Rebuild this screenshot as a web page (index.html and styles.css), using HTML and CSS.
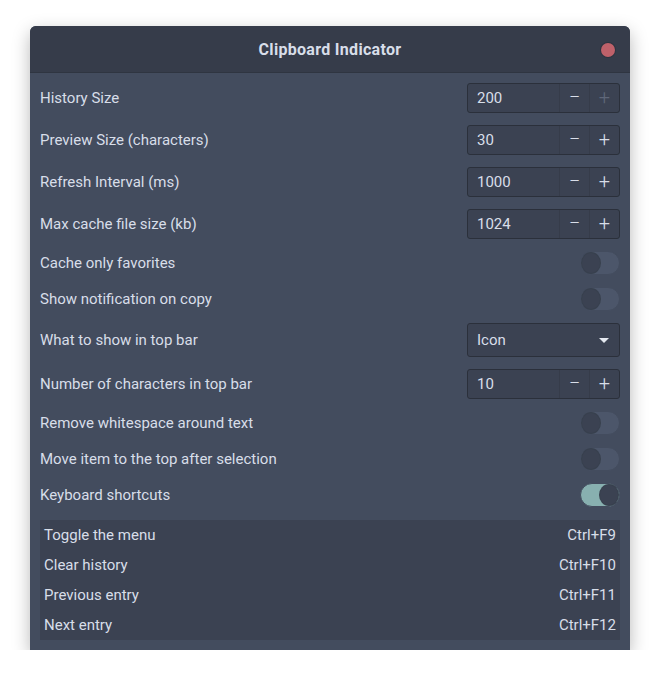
FILE: index.html
```
<!DOCTYPE html>
<html>
<head>
<meta charset="utf-8">
<link rel="stylesheet" href="styles.css">
</head>
<body>
<div class="stage">
  <div class="window">
    <div class="header">
      <div class="title">Clipboard Indicator</div>
      <div class="close"></div>
    </div>
    <div class="content">
      <div class="row"><span class="label">History Size</span>
        <div class="spin"><span class="val">200</span><span class="btn">&minus;</span><span class="btn dim">+</span></div></div>
      <div class="row"><span class="label">Preview Size (characters)</span>
        <div class="spin"><span class="val">30</span><span class="btn">&minus;</span><span class="btn">+</span></div></div>
      <div class="row"><span class="label">Refresh Interval (ms)</span>
        <div class="spin"><span class="val">1000</span><span class="btn">&minus;</span><span class="btn">+</span></div></div>
      <div class="row"><span class="label">Max cache file size (kb)</span>
        <div class="spin"><span class="val">1024</span><span class="btn">&minus;</span><span class="btn">+</span></div></div>
      <div class="row"><span class="label">Cache only favorites</span><div class="switch"></div></div>
      <div class="row"><span class="label">Show notification on copy</span><div class="switch"></div></div>
      <div class="row"><span class="label">What to show in top bar</span>
        <div class="combo"><span class="val">Icon</span><span class="arrow"></span></div></div>
      <div class="row"><span class="label">Number of characters in top bar</span>
        <div class="spin"><span class="val">10</span><span class="btn">&minus;</span><span class="btn">+</span></div></div>
      <div class="row"><span class="label">Remove whitespace around text</span><div class="switch"></div></div>
      <div class="row"><span class="label">Move item to the top after selection</span><div class="switch"></div></div>
      <div class="row"><span class="label">Keyboard shortcuts</span><div class="switch on"></div></div>
      <div class="shortcuts">
        <div class="sc"><span>Toggle the menu</span><span>Ctrl+F9</span></div>
        <div class="sc"><span>Clear history</span><span>Ctrl+F10</span></div>
        <div class="sc"><span>Previous entry</span><span>Ctrl+F11</span></div>
        <div class="sc"><span>Next entry</span><span>Ctrl+F12</span></div>
      </div>
    </div>
  </div>
</div>
</body>
</html>
```
FILE: styles.css
```
html, body { margin: 0; padding: 0; background: #ffffff; }
body { font-family: Roboto, "Noto Sans", sans-serif; color: #d8dee9; }
.stage { padding: 26px 30px 0 30px; }
.window {
  width: 600px; height: 624px; background: #434c5e;
  border-radius: 6px 6px 0 0; overflow: hidden;
  box-shadow: 0 6px 18px rgba(0,0,0,0.28);
}
.header {
  height: 46px; background: #363c4a; border-bottom: 1px solid #2f3541;
  display: flex; align-items: center; justify-content: center; position: relative;
}
.title { font-weight: 700; font-size: 16px; letter-spacing: 0.3px; color: #d8dee9; padding-top: 1px; }
.close {
  position: absolute; right: 15px; top: 17px; width: 14px; height: 14px;
  border-radius: 50%; background: #bf616a; box-shadow: 0 0 0 1px #2e3440;
}
.content { padding: 10px 10px 10px 10px; display: flex; flex-direction: column; gap: 12px; }
.row { display: flex; align-items: center; justify-content: space-between; font-size: 15px; }
.spin {
  width: 151px; height: 28px; border: 1px solid #2b303b; border-radius: 3px;
  background: #3b4252; display: flex; font-size: 15px;
}
.spin .val { flex: 1; padding-left: 9px; line-height: 28px; }
.spin .btn {
  width: 29px; border-left: 1px solid #363c4a; text-align: center; line-height: 27px;
  font-size: 20px; font-weight: 300; color: #d8dee9;
}
.spin .btn.dim { color: #5f6779; }
.switch {
  border-radius: 12px; background: #4c566a;
  border: 1px solid #434c5e; position: relative; box-sizing: border-box; width: 40px; height: 24px;
}
.switch::after {
  content: ""; position: absolute; left: 1px; top: 1px; width: 18px; height: 20px;
  border-radius: 50%; background: #3b4252; box-shadow: 0 0 0 1px #38404e;
}
.switch.on { background: #88b0b0; }
.switch.on::after { left: auto; right: 1px; }
.combo {
  width: 151px; height: 32px; border: 1px solid #2b303b; border-radius: 3px;
  background: #3b4252; display: flex; align-items: center; justify-content: space-between;
}
.combo .val { padding-left: 9px; }
.combo .arrow {
  width: 0; height: 0; border-left: 5px solid transparent; border-right: 5px solid transparent;
  border-top: 5px solid #e5e9f0; margin-right: 10px;
}
.shortcuts { background: #3b4252; margin-top: 1px; }
.sc {
  height: 30px; display: flex; align-items: center; justify-content: space-between;
  padding: 0 4px; font-size: 15px;
}
```
